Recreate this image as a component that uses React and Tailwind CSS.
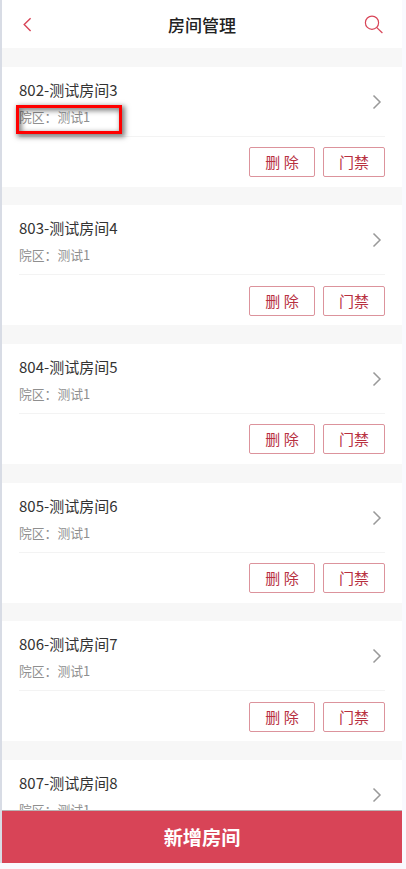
import { useState } from 'react';

const ROOMS = [
  { id: 802, name: '测试房间3', campus: '测试1' },
  { id: 803, name: '测试房间4', campus: '测试1' },
  { id: 804, name: '测试房间5', campus: '测试1' },
  { id: 805, name: '测试房间6', campus: '测试1' },
  { id: 806, name: '测试房间7', campus: '测试1' },
  { id: 807, name: '测试房间8', campus: '测试1' },
];

function Header() {
  return (
    <header className="h-12 shrink-0 bg-white flex items-center justify-between pl-[19px] pr-[18px]">
      <button className="w-5 h-5 pt-0.5">
        <svg width="12" height="16" viewBox="0 0 12 16" fill="none" stroke="#d84457" strokeWidth="1.4">
          <path d="M9.6 1.2 3.2 7.6l6.4 6.4" />
        </svg>
      </button>
      <h1 className="text-[17px] leading-6 font-medium text-[#222] pt-0.5 pr-px">房间管理</h1>
      <button className="w-5 h-5">
        <svg width="20" height="20" viewBox="0 0 20 20" fill="none" stroke="#d84457" strokeWidth="1.2">
          <circle cx="8" cy="8.7" r="6.6" />
          <path d="m12.6 13.4 5.8 5.6" />
        </svg>
      </button>
    </header>
  );
}

function RoomCard({ room, highlighted }) {
  return (
    <div className="h-[120.2px] shrink-0 bg-white px-[17px]">
      <div className="h-[70px] flex items-center justify-between border-b border-[#f3f3f3]">
        <div className="relative pt-0.5">
          <p className="text-[15px] leading-6 text-[#333]">{room.id}-{room.name}</p>
          <p className="text-[12.8px] leading-5 mt-[5px] text-[#8f8f8f]">院区：{room.campus}</p>
          {highlighted && (
            <span className="absolute -left-[3px] top-[29px] w-[106px] h-[29px] border-3 border-[#f00] shadow-[2px_2px_5px_1px_rgba(0,0,0,0.5),inset_2px_2px_5px_1px_rgba(0,0,0,0.45)]" />
          )}
        </div>
        <svg className="mr-[3px] mt-px" width="10" height="16" viewBox="0 0 10 16" fill="none" stroke="#999" strokeWidth="1.5">
          <path d="m1.5 1.5 6.5 6.5-6.5 6.5" />
        </svg>
      </div>
      <div className="flex justify-end gap-2 pt-[10.5px]">
        <button className="w-[66px] h-[30px] pb-px border border-[#dc939c] rounded-[2px] text-[15px] leading-none text-[#b8303f]">删 除</button>
        <button className="w-[62px] h-[30px] pb-px border border-[#dc939c] rounded-[2px] text-[15px] leading-none text-[#b8303f]">门禁</button>
      </div>
    </div>
  );
}

export default function App() {
  const [rooms] = useState(ROOMS);

  return (
    <div className="h-[869px] overflow-hidden bg-[#f9f9fe] pr-1 font-['Noto_Sans_CJK_SC',sans-serif]">
      <div className="h-[863px] flex flex-col border-l-2 border-[#d8dce5] bg-[#f7f7f7]">
        <Header />
        <main className="flex-1 min-h-0 overflow-hidden flex flex-col gap-[18.5px] pt-[18.5px]">
          {rooms.map((room, i) => (
            <RoomCard key={room.id} room={room} highlighted={i === 0} />
          ))}
        </main>
        <button className="h-[53px] shrink-0 bg-[#d84457] border-t border-[#b9b4b5] text-[19.2px] font-bold text-white">
          新增房间
        </button>
      </div>
    </div>
  );
}
